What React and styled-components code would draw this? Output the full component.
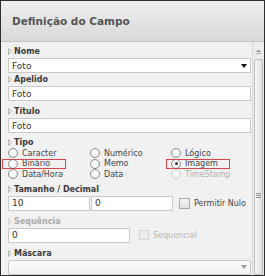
import React from 'react';
import styled, { createGlobalStyle } from 'styled-components';

const GlobalStyle = createGlobalStyle`
  html, body { margin: 0; padding: 0; background: #fff; }
  body { font-family: "DejaVu Sans", Verdana, sans-serif; }
  * { box-sizing: border-box; }
`;

const Window = styled.div`
  width: 265px;
  height: 276px;
  border: 1px solid #2e2e2e;
  display: flex;
  flex-direction: column;
  overflow: hidden;
  background: #f1f1f1;
`;

const Header = styled.header`
  flex: none;
  height: 41px;
  display: flex;
  align-items: center;
  padding-left: 11px;
  background: linear-gradient(#efefef, #d9d9d9);
  border-bottom: 1px solid #c6c6c6;
`;

const Title = styled.h1`
  margin: 0;
  font-size: 10.5px;
  font-weight: bold;
  color: #555;
`;

const Body = styled.div`
  flex: 1;
  min-height: 0;
  display: flex;
`;

const Content = styled.div`
  flex: 1;
  padding: 3px 1px 0 7px;
`;

const Label = styled.div`
  display: flex;
  align-items: center;
  gap: 2px;
  height: ${p => p.$h || 13}px;
  font-size: 8px;
  font-weight: bold;
  color: ${p => (p.$disabled ? '#ababab' : '#3a3a3a')};
`;

const Input = styled.div`
  height: 15px;
  width: ${p => (p.$w ? `${p.$w}px` : '100%')};
  flex: none;
  display: flex;
  align-items: center;
  padding: 0 3px;
  margin-bottom: ${p => (p.$mb ?? 4)}px;
  border: 1px solid #c9c9c9;
  background: #fff;
  font-size: 9px;
  color: #333;
`;

const Select = styled(Input)`
  justify-content: space-between;
  padding-right: 3px;
  border-radius: ${p => (p.$soft ? '2px' : '0')};
  background: ${p => (p.$soft ? 'linear-gradient(#fbfbfb, #f1f1f1)' : '#fff')};
`;

const RadioGrid = styled.div`
  display: grid;
  grid-template-columns: 82px 81px 1fr;
  grid-auto-rows: 10.5px;
  margin-bottom: 3px;
`;

const RadioItem = styled.div`
  position: relative;
  display: flex;
  align-items: center;
  gap: 4px;
  font-size: 8px;
  color: ${p => (p.$disabled ? '#b0b0b0' : '#444')};
`;

const Circle = styled.span`
  width: 10px;
  height: 10px;
  flex: none;
  border-radius: 50%;
  border: 1px solid ${p => (p.$disabled ? '#cfcfcf' : '#8c8c8c')};
  background: radial-gradient(circle at 50% 40%, #fff, #ececec);
  display: flex;
  align-items: center;
  justify-content: center;
  &::after {
    content: '';
    width: 3px;
    height: 3px;
    border-radius: 50%;
    background: ${p => (p.$checked ? '#333' : 'transparent')};
  }
`;

const Highlight = styled.span`
  position: absolute;
  left: ${p => p.$left}px;
  top: 0;
  width: 64px;
  height: 10px;
  border: 1px solid #d9434a;
  pointer-events: none;
`;

const Row = styled.div`
  display: flex;
  align-items: flex-start;
  gap: ${p => p.$gap || 1}px;
`;

const Check = styled.label`
  display: flex;
  align-items: center;
  gap: 4px;
  height: 15px;
  margin-left: ${p => p.$ml}px;
  font-size: 8px;
  color: ${p => (p.$disabled ? '#b5b5b5' : '#444')};
`;

const Box = styled.span`
  width: ${p => p.$size}px;
  height: ${p => p.$size}px;
  border: 1px solid ${p => (p.$disabled ? '#d4d4d4' : '#a9a9a9')};
  background: ${p => (p.$disabled ? '#ececec' : 'linear-gradient(#f6f6f6, #e0e0e0)')};
`;

const Scrollbar = styled.div`
  width: 12px;
  flex: none;
  display: flex;
  flex-direction: column;
  padding: 2px 1px 0 1px;
  background: #ececec;
  border-left: 1px solid #dadada;
`;

const ScrollUp = styled.div`
  height: 15px;
  display: flex;
  align-items: center;
  justify-content: center;
`;

const Thumb = styled.div`
  flex: 1;
  display: flex;
  flex-direction: column;
  align-items: center;
  border: 1px solid #bdbdbd;
  border-radius: 2px;
  background: linear-gradient(90deg, #f7f7f7, #e2e2e2);
`;

const Grip = styled.div`
  margin-top: 133px;
  width: 5px;
  height: 5px;
  background: repeating-linear-gradient(#8e8e8e 0 1px, transparent 1px 2px);
`;

const Arrow = ({ disabled }) => (
  <svg width="4" height="7" viewBox="0 0 4 7">
    <path d="M0.5 0.5 L3.5 3.5 L0.5 6.5 Z" fill="none" stroke={disabled ? '#d2d2d2' : '#b5b5b5'} strokeWidth="1" />
  </svg>
);

const Caret = ({ color }) => (
  <svg width="6" height="4" viewBox="0 0 6 4">
    <path d="M0 0 H6 L3 4 Z" fill={color} />
  </svg>
);

const Field = ({ label, disabled, h }) => (
  <Label $disabled={disabled} $h={h}>
    <Arrow disabled={disabled} />
    {label}
  </Label>
);

const tipos = [
  ['Caracter', 'Numérico', 'Lógico'],
  ['Binário', 'Memo', 'Imagem'],
  ['Data/Hora', 'Data', 'TimeStamp'],
];

export default function App() {
  return (
    <>
      <GlobalStyle />
      <Window>
        <Header>
          <Title>Definição do Campo</Title>
        </Header>
        <Body>
          <Content>
            <Field label="Nome" />
            <Select $mb={0}>
              Foto
              <Caret color="#111" />
            </Select>

            <Field label="Apelido" />
            <Input>Foto</Input>

            <Field label="Título" />
            <Input>Foto</Input>

            <Field label="Tipo" h={11} />
            <RadioGrid>
              {tipos.flat().map(t => (
                <RadioItem key={t} $disabled={t === 'TimeStamp'}>
                  <Circle $checked={t === 'Imagem'} $disabled={t === 'TimeStamp'} />
                  {t}
                  {t === 'Binário' && <Highlight $left={-6} />}
                  {t === 'Imagem' && <Highlight $left={-5} />}
                </RadioItem>
              ))}
            </RadioGrid>

            <Field label="Tamanho / Decimal" />
            <Row>
              <Input $w={82}>10</Input>
              <Input $w={82}>0</Input>
              <Check $ml={5}>
                <Box $size={11} />
                Permitir Nulo
              </Check>
            </Row>

            <Field label="Sequência" disabled />
            <Row>
              <Input $w={122}>0</Input>
              <Check $ml={8} $disabled>
                <Box $size={10} $disabled />
                Sequencial
              </Check>
            </Row>

            <Field label="Máscara" />
            <Select $soft $mb={0}>
              <span />
              <Caret color="#9a9a9a" />
            </Select>
          </Content>
          <Scrollbar>
            <ScrollUp>
              <svg width="5" height="5" viewBox="0 0 5 5">
                <path d="M0 3 L2.5 0.5 L5 3 Z" fill="#8a8a8a" />
                <rect x="0" y="4" width="5" height="1" fill="#b0b0b0" />
              </svg>
            </ScrollUp>
            <Thumb>
              <Grip />
            </Thumb>
          </Scrollbar>
        </Body>
      </Window>
    </>
  );
}
